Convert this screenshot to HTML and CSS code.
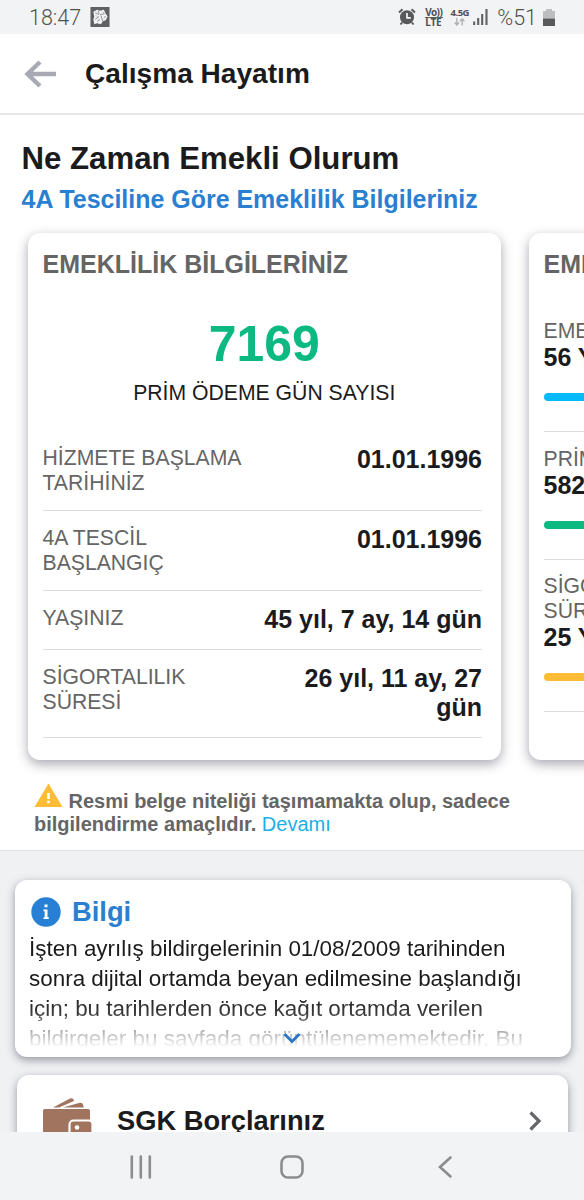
FILE: index.html
```html
<!DOCTYPE html>
<html lang="tr">
<head>
    <meta charset="UTF-8">
    <meta name="viewport" content="width=device-width, initial-scale=1.0">
    <title>Çalışma Hayatım</title>
    <link rel="stylesheet" href="styles.css">
</head>
<body>
    <div class="status-bar">
        <span class="clock">18:47</span>
        <svg class="app-icon" width="20" height="20" viewBox="0 0 20 21">
            <rect width="20" height="21" fill="#606163"/>
            <path d="M3 5l4-2 3 1 4-1 2 4 2 3-2 4-3 1-2 3-4-1-3 1-1-5 1-3z" fill="#f2f3f5"/>
            <path d="M5 6l4 2M8 4l1 3M9 10l-4 3M10 8l5-1M11 9l2 6M7 15l3-2M13 5l1 1M14 11l2-1M6 9l1 1" stroke="#606163" stroke-width=".7"/>
        </svg>
        <div class="status-right">
            <svg class="alarm" width="18" height="18" viewBox="0 0 18 18">
                <path d="M1 4.500l3.500-3.200M17 4.500l-3.500-3.200M4 14.500l-1.500 2M14 14.500l1.500 2" stroke="#58595b" stroke-width="2" fill="none"/>
                <circle cx="9" cy="9.300" r="7" fill="#58595b"/>
                <path d="M9 5v4.800h3.800" stroke="#f2f3f5" stroke-width="1.700" fill="none"/>
            </svg>
            <div class="volte"><span>Vo))</span><span>LTE</span></div>
            <div class="network">
                <span>4.5G</span>
                <svg width="13" height="8" viewBox="0 0 13 9">
                    <path d="M3.500 0v7.500M1 5l2.500 2.700L6 5M9.500 8.500V1M7 3.700L9.500 1 12 3.700" stroke="#b0b1b3" stroke-width="1.600" fill="none"/>
                </svg>
            </div>
            <svg class="signal" width="15" height="16" viewBox="0 0 15 16">
                <path d="M1.200 12.500V16M5.200 9V16M9.200 5V16M13.500 0V16" stroke="#606163" stroke-width="2.100"/>
            </svg>
            <span class="percent">%51</span>
            <svg class="battery" width="12" height="17" viewBox="0 0 12 17">
                <path d="M3 0h6v2h3v7.500H0V2h3z" fill="#bdbec0"/>
                <path d="M0 9.500h12V17H0z" fill="#58595b"/>
            </svg>
        </div>
    </div>

    <header class="top-bar">
        <svg width="32" height="28" viewBox="0 0 32 28">
            <path d="M32 14H4M16 2L3.500 14 16 26" stroke="#a9a9b6" stroke-width="4.400" fill="none"/>
        </svg>
        <span class="top-title">Çalışma Hayatım</span>
    </header>

    <section class="retirement">
        <h1>Ne Zaman Emekli Olurum</h1>
        <h2>4A Tesciline Göre Emeklilik Bilgileriniz</h2>

        <div class="slider">
            <div class="card">
                <h3>EMEKLİLİK BİLGİLERİNİZ</h3>
                <div class="day-count">7169</div>
                <div class="day-label">PRİM ÖDEME GÜN SAYISI</div>
                <div class="row">
                    <span class="label">HİZMETE BAŞLAMA TARİHİNİZ</span>
                    <span class="value">01.01.1996</span>
                </div>
                <div class="row">
                    <span class="label">4A TESCİL<br>BAŞLANGIÇ</span>
                    <span class="value">01.01.1996</span>
                </div>
                <div class="row">
                    <span class="label">YAŞINIZ</span>
                    <span class="value">45 yıl, 7 ay, 14 gün</span>
                </div>
                <div class="row">
                    <span class="label">SİGORTALILIK<br>SÜRESİ</span>
                    <span class="value">26 yıl, 11 ay, 27<br>gün</span>
                </div>
            </div>

            <div class="card next-card">
                <h3>EMEKLİLİK</h3>
                <div class="goal">
                    <span class="label">EMEKLİLİK</span>
                    <span class="value">56 YAŞ</span>
                    <div class="bar blue"></div>
                </div>
                <div class="goal">
                    <span class="label">PRİM</span>
                    <span class="value">5825</span>
                    <div class="bar green"></div>
                </div>
                <div class="goal">
                    <span class="label">SİGORTALILIK<br>SÜRESİ</span>
                    <span class="value">25 YIL</span>
                    <div class="bar yellow"></div>
                </div>
            </div>
        </div>

        <p class="notice">
            <svg width="29" height="25" viewBox="0 0 29 25">
                <path d="M14.500 .500L28.500 24H.500z" fill="#fcbc35"/>
                <path d="M14.500 10v6M14.500 17.800v2.500" stroke="#fff" stroke-width="2.600"/>
            </svg>
            Resmi belge niteliği taşımamakta olup, sadece<br>bilgilendirme amaçlıdır. <a>Devamı</a>
        </p>
    </section>

    <main>
        <div class="info-card">
            <div class="info-head">
                <svg width="30" height="30" viewBox="0 0 30 30">
                    <circle cx="15" cy="15" r="14.700" fill="#2780d3"/>
                    <path d="M13.500 7.500h3v2.800h-3zM12.500 12.500h4v7.800h1.300v1.700h-5.300v-1.700h1.200v-6.100h-1.200z" fill="#fff"/>
                </svg>
                <span>Bilgi</span>
            </div>
            <div class="info-text">
                İşten ayrılış bildirgelerinin 01/08/2009 tarihinden<br>
                sonra dijital ortamda beyan edilmesine başlandığı<br>
                için; bu tarihlerden önce kağıt ortamda verilen<br>
                bildirgeler bu sayfada görüntülenememektedir. Bu
            </div>
            <svg class="expand" width="18" height="12" viewBox="0 0 18 12">
                <path d="M1.500 2L9 9.500 16.500 2" stroke="#2b78c4" stroke-width="3" fill="none"/>
            </svg>
        </div>

        <div class="menu-card">
            <svg width="50" height="44" viewBox="0 0 50 44">
                <g fill="#a1745f">
                    <path d="M10 8.500L27 -.500q2.500-1 3.500 1l.500 1.500L16 8.500z"/>
                    <path d="M20 8.500l16-4.500q3.500-.700 4 1.500l.800 3z"/>
                    <rect x="0" y="10" width="47" height="36" rx="2"/>
                </g>
                <rect x="26.500" y="21.500" width="23" height="30" rx="4" fill="#a1745f" stroke="#fff" stroke-width="2.200"/>
                <circle cx="34" cy="28.500" r="2.300" fill="#fff"/>
            </svg>
            <span>SGK Borçlarınız</span>
            <svg class="arrow" width="12" height="20" viewBox="0 0 12 20">
                <path d="M1.500 1.500L10 10l-8.500 8.500" stroke="#66676a" stroke-width="3.200" fill="none"/>
            </svg>
        </div>
    </main>

    <nav>
        <svg width="22" height="24" viewBox="0 0 22 24">
            <path d="M1.800 1.500v21M10.800 1.500v21M19.800 1.500v21" stroke="#8b8c8f" stroke-width="2.600" stroke-linecap="round"/>
        </svg>
        <svg width="24" height="24" viewBox="0 0 24 24">
            <rect x="1.500" y="1.500" width="21" height="21" rx="6.500" stroke="#8b8c8f" stroke-width="2.600" fill="none"/>
        </svg>
        <svg width="14" height="22" viewBox="0 0 14 22">
            <path d="M12.500 1.500L2 11l10.500 9.500" stroke="#8b8c8f" stroke-width="2.600" stroke-linecap="round" fill="none"/>
        </svg>
    </nav>
</body>
</html>
```
FILE: styles.css
```css
* {
    box-sizing: border-box;
}
body {
    margin: 0;
    width: 584px;
    height: 1200px;
    display: flex;
    flex-direction: column;
    overflow: hidden;
    font-family: "Liberation Sans", Arial, sans-serif;
    color: #1b1b1d;
    background-color: #f0f1f3;
}
svg {
    display: block;
    flex-shrink: 0;
    overflow: visible;
}
h1, h2, h3, p {
    margin: 0;
}

.status-bar {
    display: flex;
    align-items: center;
    flex-shrink: 0;
    height: 34px;
    padding: 0 29px 0 29px;
    background-color: #f2f3f5;
    font-family: Roboto, sans-serif;
    font-size: 21.5px;
    font-weight: 300;
    color: #505153;
}
.app-icon {
    margin-left: 9px;
}
.status-right {
    display: flex;
    align-items: center;
    margin-left: auto;
}
.volte {
    display: flex;
    flex-direction: column;
    width: 18px;
    margin-left: 9px;
    font: bold 10px/9px "Noto Sans", sans-serif;
    letter-spacing: -0.6px;
    white-space: nowrap;
}
.volte span + span {
    border-top: 1px solid #606163;
    letter-spacing: -0.2px;
}
.network {
    display: flex;
    flex-direction: column;
    align-items: center;
    gap: 1px;
    width: 19px;
    margin-left: 7px;
    font: bold 9.5px/9px "Noto Sans", sans-serif;
    letter-spacing: -0.5px;
}
.signal {
    margin-left: 4px;
}
.percent {
    margin-left: 9px;
}
.battery {
    margin-left: 6px;
}

.top-bar {
    display: flex;
    align-items: center;
    flex-shrink: 0;
    height: 81px;
    padding-left: 24px;
    background-color: #fff;
    border-bottom: 2px solid #e6e6e8;
}
.top-title {
    margin-left: 29px;
    font-size: 28.1px;
    font-weight: bold;
}

.retirement {
    flex-shrink: 0;
    height: 736px;
    padding-top: 26px;
    background-color: #fff;
    border-bottom: 1px solid #e2e3e5;
    overflow: hidden;
}
h1 {
    padding-left: 21.5px;
    font-size: 31.2px;
    line-height: 36px;
}
h2 {
    padding-left: 21.5px;
    margin-top: 7px;
    font-size: 24.96px;
    line-height: 30px;
    color: #2b7fd0;
}
.slider {
    display: flex;
    gap: 28px;
    margin-top: 19px;
    padding-left: 28px;
}
.card {
    flex-shrink: 0;
    width: 473px;
    height: 527px;
    padding: 16px 19px 0 14.5px;
    background-color: #fff;
    border-radius: 12px;
    box-shadow: 0 4px 12px rgba(60, 60, 80, 0.45);
}
h3 {
    font-size: 25px;
    line-height: 30px;
    color: #656565;
}
.day-count {
    margin-top: 35px;
    padding-left: 4px;
    font-size: 49.9px;
    line-height: 60px;
    font-weight: bold;
    text-align: center;
    color: #0bb981;
}
.day-label {
    margin-top: 6px;
    padding-left: 4px;
    margin-bottom: 26px;
    font-size: 21.2px;
    line-height: 25px;
    text-align: center;
}
.row {
    display: flex;
    justify-content: space-between;
    padding: 14px 0 15px;
    border-bottom: 1px solid #dcdcde;
}
.label {
    font-size: 21.2px;
    line-height: 25px;
    color: #656565;
}
.row .label {
    width: 210px;
}
.value {
    font-size: 25px;
    line-height: 29px;
    font-weight: bold;
    white-space: nowrap;
    text-align: right;
}
.next-card h3 {
    margin-bottom: 25px;
}
.goal {
    display: flex;
    flex-direction: column;
    align-items: flex-start;
    padding: 14px 0 30px;
    border-bottom: 1px solid #dcdcde;
}
.goal:last-child {
    padding-top: 13px;
}
.bar {
    width: 100%;
    height: 8px;
    margin-top: 21px;
    border-radius: 4px;
}
.blue {
    background-color: #06b9fb;
}
.green {
    background-color: #0bb981;
}
.yellow {
    background-color: #fcbc35;
}
.notice {
    padding: 30px 0 0 34px;
    font-size: 20px;
    line-height: 23px;
    font-weight: bold;
    color: #656565;
}
.notice svg {
    display: inline-block;
    margin: -12px 0 0 0;
    vertical-align: 0;
}
.notice a {
    font-weight: normal;
    color: #19b0e6;
}

main {
    flex: 1;
    min-height: 0;
    padding: 29px 13px 0 15px;
    overflow: hidden;
}
.info-card {
    position: relative;
    height: 177px;
    padding: 17px 14px 0;
    background-color: #fff;
    border-radius: 12px;
    box-shadow: 0 3px 8px rgba(60, 60, 80, 0.5);
}
.info-head {
    display: flex;
    align-items: center;
    gap: 11px;
    height: 30px;
    padding-left: 2px;
    font-size: 27.3px;
    font-weight: bold;
    color: #2b7fd0;
}
.info-text {
    height: 114px;
    margin-top: 7px;
    font-size: 22.45px;
    line-height: 30px;
    white-space: nowrap;
    overflow: hidden;
    -webkit-mask-image: linear-gradient(#000 60px, rgba(0, 0, 0, 0.85) 80px, rgba(0, 0, 0, 0.4) 95px, transparent 114px);
    mask-image: linear-gradient(#000 60px, rgba(0, 0, 0, 0.85) 80px, rgba(0, 0, 0, 0.4) 95px, transparent 114px);
}
.expand {
    position: absolute;
    left: 268px;
    top: 152px;
}
.menu-card {
    display: flex;
    align-items: center;
    height: 91px;
    margin: 18px 3px 0 2px;
    padding: 0 27px 0 26px;
    background-color: #fff;
    border-radius: 12px;
    box-shadow: 0 3px 8px rgba(60, 60, 80, 0.5);
    font-size: 27.3px;
    font-weight: bold;
}
.menu-card span {
    margin-left: 24px;
}
.arrow {
    margin-left: auto;
}

nav {
    position: relative;
    display: flex;
    align-items: center;
    flex-shrink: 0;
    height: 68px;
    padding: 2px 0 0 130px;
    background-color: #f2f3f5;
}
nav svg + svg {
    margin-left: 128px;
}
nav svg:last-child {
    margin-left: 134px;
}
```
